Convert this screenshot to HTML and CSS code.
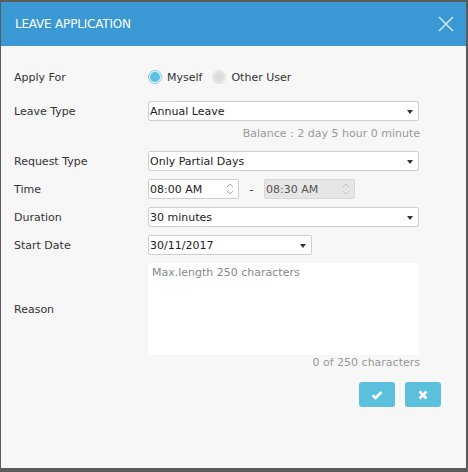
FILE: index.html
```html
<!DOCTYPE html>
<html>
<head>
<meta charset="utf-8">
<link rel="stylesheet" href="styles.css">
</head>
<body>
<div class="dialog">
  <div class="header">
    <span class="title">LEAVE APPLICATION</span>
    <svg class="close" width="16" height="16" viewBox="0 0 16 16"><path d="M1 1L15 15M15 1L1 15" stroke="#cfe4f4" stroke-width="1.6" fill="none"/></svg>
  </div>
  <div class="body">
    <div class="row r-apply">
      <div class="label">Apply For</div>
      <div class="ctrl radios">
        <span class="radio on"><span class="dot"></span></span><span class="rlabel">Myself</span>
        <span class="radio off"><span class="dot"></span></span><span class="rlabel">Other User</span>
      </div>
    </div>
    <div class="row r-leave">
      <div class="label">Leave Type</div>
      <div class="ctrl"><div class="select full">Annual Leave<span class="caret"></span></div></div>
    </div>
    <div class="note balance">Balance : 2 day 5 hour 0 minute</div>
    <div class="row r-req">
      <div class="label">Request Type</div>
      <div class="ctrl"><div class="select full">Only Partial Days<span class="caret"></span></div></div>
    </div>
    <div class="row r-std">
      <div class="label">Time</div>
      <div class="ctrl times">
        <div class="time">08:00 AM<svg class="spin" width="10" height="16" viewBox="0 0 10 16"><path d="M2 6L5 3L8 6M2 10L5 13L8 10" stroke="#aaa" stroke-width="1" fill="none"/></svg></div>
        <span class="dash">-</span>
        <div class="time disabled">08:30 AM<svg class="spin" width="10" height="16" viewBox="0 0 10 16"><path d="M2 6L5 3L8 6M2 10L5 13L8 10" stroke="#c4c4c4" stroke-width="1" fill="none"/></svg></div>
      </div>
    </div>
    <div class="row r-std">
      <div class="label">Duration</div>
      <div class="ctrl"><div class="select full">30 minutes<span class="caret"></span></div></div>
    </div>
    <div class="row r-std">
      <div class="label">Start Date</div>
      <div class="ctrl"><div class="select date">30/11/2017<span class="caret"></span></div></div>
    </div>
    <div class="row r-reason">
      <div class="label">Reason</div>
      <div class="ctrl"><div class="textarea">Max.length 250 characters</div></div>
    </div>
    <div class="note counter">0 of 250 characters</div>
    <div class="actions">
      <button class="btn"><svg width="12" height="12" viewBox="0 0 12 12"><path d="M1.5 6.2L4.5 9L10.5 3" stroke="#fff" stroke-width="2.6" fill="none" stroke-linejoin="miter"/></svg></button>
      <button class="btn"><svg width="10" height="10" viewBox="0 0 10 10"><path d="M1.5 1.5L8.5 8.5M8.5 1.5L1.5 8.5" stroke="#fff" stroke-width="2.6" fill="none"/></svg></button>
    </div>
  </div>
</div>
</body>
</html>
```

FILE: styles.css
```css
html, body {
  margin: 0;
  padding: 0;
  background: #5b5b5b;
}
body {
  padding: 2px 2px 4px 1px;
  font-family: "DejaVu Sans", Verdana, sans-serif;
  font-size: 11px;
  color: #333;
}
.dialog {
  width: 465px;
  height: 466px;
  background: #f7f7f7;
  display: flex;
  flex-direction: column;
}
.header {
  height: 44px;
  background: #3a98d5;
  display: flex;
  align-items: center;
  justify-content: space-between;
  padding: 0 12px 0 14px;
  flex: none;
}
.title {
  color: #fff;
  font-size: 12px;
  letter-spacing: -0.2px;
}
.close {
  display: block;
}
.body {
  padding: 21px 0 0 13px;
  display: flex;
  flex-direction: column;
}
.row {
  display: flex;
  align-items: center;
  height: 20px;
}
.label {
  width: 134px;
  flex: none;
}
.ctrl {
  display: flex;
  align-items: center;
}
.r-leave { margin-top: 14px; }
.r-req { margin-top: 10px; }
.r-std { margin-top: 8px; }
.r-reason { margin-top: 8px; height: 92px; }
.radios .radio {
  width: 14px;
  height: 14px;
  border-radius: 50%;
  box-sizing: border-box;
  display: flex;
  align-items: center;
  justify-content: center;
  margin-right: 5px;
}
.radio.on {
  border: 1px solid #7fcbe8;
  background: #e3f4fb;
}
.radio.on .dot {
  width: 10px;
  height: 10px;
  border-radius: 50%;
  background: #5bc0e3;
}
.radio.off {
  border: 1px solid #dcdcdc;
  background: #eee;
  margin-left: 10px;
}
.radio.off .dot {
  width: 10px;
  height: 10px;
  border-radius: 50%;
  background: #ddd;
}
.select, .time {
  height: 20px;
  box-sizing: border-box;
  border: 1px solid #cfcfcf;
  border-radius: 2px;
  background: #fff;
  display: flex;
  align-items: center;
  padding: 0 0 0 1px;
  position: relative;
  color: #222;
}
.select.full { width: 271px; }
.select.date { width: 164px; }
.caret {
  position: absolute;
  right: 5px;
  top: 8px;
  width: 0;
  height: 0;
  border-left: 3.5px solid transparent;
  border-right: 3.5px solid transparent;
  border-top: 4px solid #333;
}
.time {
  width: 91px;
  justify-content: space-between;
  padding-right: 3px;
}
.time.disabled {
  background: #e6e6e6;
  border-color: #d8d8d8;
  color: #555;
}
.spin { display: block; }
.dash {
  width: 25px;
  text-align: center;
  color: #333;
}
.textarea {
  width: 271px;
  height: 92px;
  box-sizing: border-box;
  background: #fff;
  padding: 3px 4px;
  color: #888;
}
.note {
  width: 406px;
  text-align: right;
  color: #999;
  height: 14px;
  line-height: 14px;
}
.balance { margin-top: 6px; }
.counter { margin-top: 1px; }
.actions {
  display: flex;
  justify-content: flex-end;
  gap: 10px;
  width: 427px;
  margin-top: 12px;
}
.btn {
  width: 36px;
  height: 25px;
  border: none;
  border-radius: 3px;
  background: #5bc0de;
  display: flex;
  align-items: center;
  justify-content: center;
  padding: 0;
}
.btn svg { display: block; }
```
